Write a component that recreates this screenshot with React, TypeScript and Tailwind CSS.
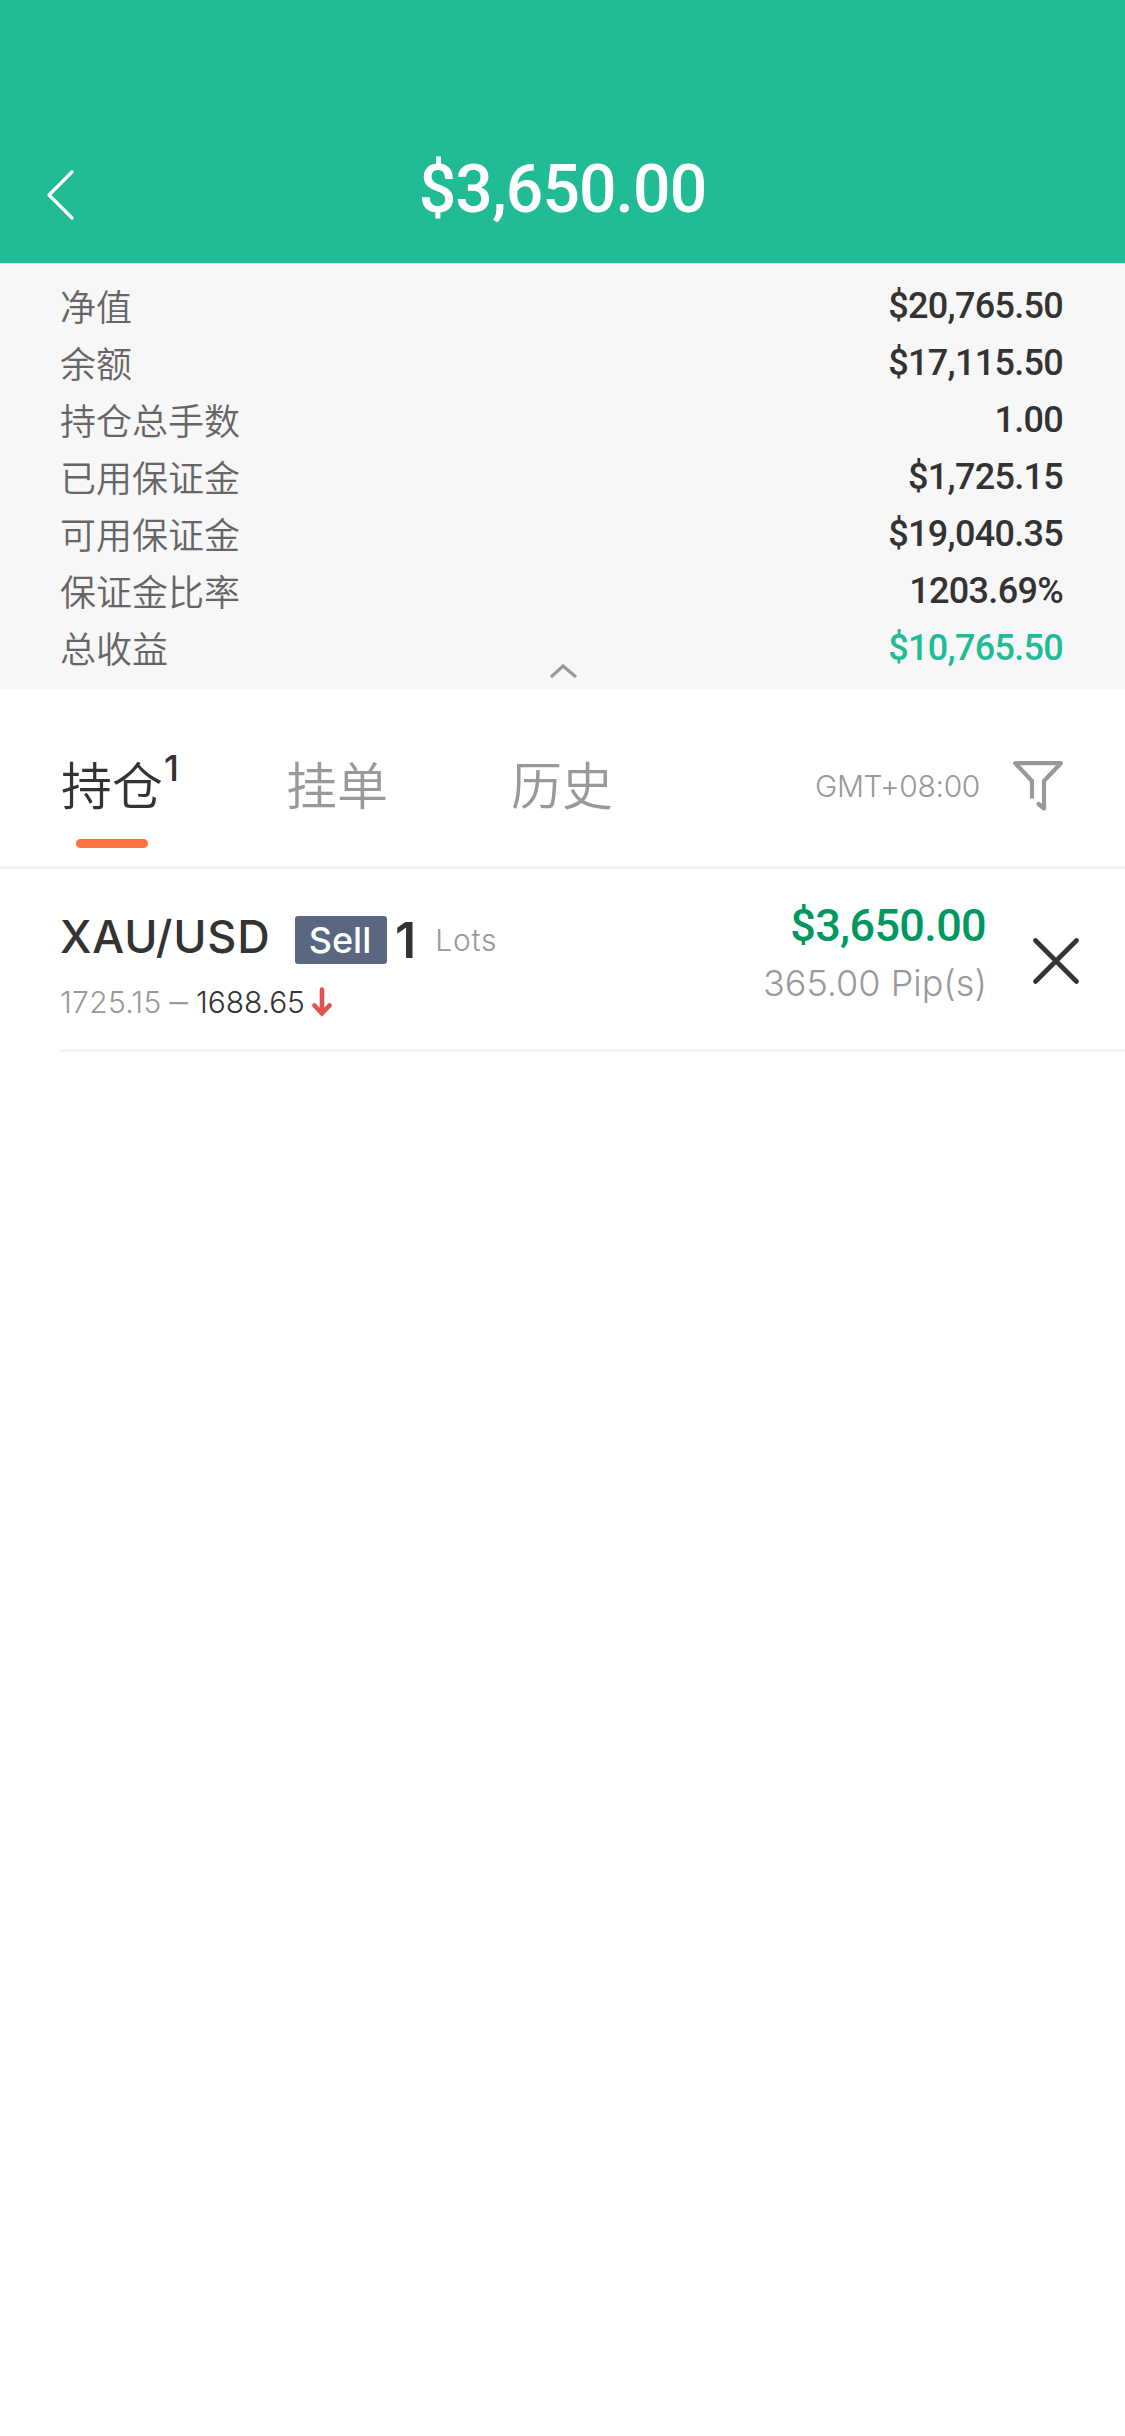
const SUMMARY = [
  { label: "净值", value: "$20,765.50" },
  { label: "余额", value: "$17,115.50" },
  { label: "持仓总手数", value: "1.00" },
  { label: "已用保证金", value: "$1,725.15" },
  { label: "可用保证金", value: "$19,040.35" },
  { label: "保证金比率", value: "1203.69%" },
  { label: "总收益", value: "$10,765.50", positive: true },
];

function Header() {
  return (
    <header className="flex h-[263px] items-end bg-[#21bb95]">
      <div className="grid h-[138px] w-full grid-cols-[120px_1fr_120px] items-center">
        <svg className="ml-[46px] mt-[2px] h-[50px] w-[30px]" viewBox="0 0 30 50" fill="none" stroke="#fff" strokeWidth="3.2" strokeLinecap="round" strokeLinejoin="round">
          <path d="M26 2 3 25l23 23" />
        </svg>
        <h1 className="mb-2 text-center font-['Roboto'] text-[66px] font-medium leading-none tracking-[-0.9px] text-white">$3,650.00</h1>
      </div>
    </header>
  );
}

function Summary() {
  return (
    <section className="relative h-[426px] border-t border-[#dcdcdc] bg-[#f7f7f7] pl-[60px] pr-[62px] pt-[14px]">
      {SUMMARY.map((row) => (
        <div key={row.label} className="flex h-[57px] items-center justify-between">
          <span className="pb-[2px] text-4xl/[57px] font-[350] text-[#666]">{row.label}</span>
          <span
            className={`pb-px font-['Roboto'] text-4xl/[54px] font-medium tracking-[-0.7px] ${
              row.positive ? "text-[#21bb95]" : "text-[#333]"
            }`}
          >
            {row.value}
          </span>
        </div>
      ))}
      <svg className="absolute left-[549px] top-[400px] h-[14px] w-[30px]" viewBox="0 0 30 14" fill="none" stroke="#999" strokeWidth="3.2">
        <path d="M2 13 14 2 27 13" />
      </svg>
    </section>
  );
}

function Tabs() {
  return (
    <nav className="flex h-[180px] items-center border-b-3 border-[#f3f3f3] pl-[61px] pr-[62px] pt-[11px] text-[51px] font-[350] text-[#999]">
      <div className="relative w-[225px] text-[#333]">
        持仓
        <span className="absolute left-[103px] top-[3px] font-['Inter'] text-4xl font-medium">1</span>
        <span className="absolute left-[15px] top-[94px] h-[9px] w-18 rounded-full bg-[#ff7240]" />
      </div>
      <div className="w-[225px]">挂单</div>
      <div>历史</div>
      <div className="ml-auto mt-[6px] flex items-center">
        <span className="font-['Inter'] text-3xl font-[350] tracking-[-0.35px]">GMT+08:00</span>
        <svg className="ml-[33px] h-[50px] w-[50px]" viewBox="0 0 50 50" fill="none" stroke="#999" strokeWidth="4.2" strokeLinecap="round" strokeLinejoin="round">
          <path d="M19 36V20L2.200 2.200H47.800L31 20V47.500L25.500 43" />
        </svg>
      </div>
    </nav>
  );
}

function Position() {
  return (
    <article className="ml-[60px] flex h-[183px] border-b-3 border-[#f3f3f3] font-['Inter']">
      <div className="flex-1 pt-[41px]">
        <div className="flex h-[60px] items-center">
          <span className="mb-2 w-[235px] text-[45px] font-medium leading-none tracking-[0.8px] text-[#333]">XAU/USD</span>
          <span className="flex h-12 w-[92px] items-center justify-center rounded-[3px] bg-[#596880] pr-[2px] text-4xl font-medium text-white">
            Sell
          </span>
          <span className="ml-[8px] text-[50px] font-semibold leading-none text-[#333]">1</span>
          <span className="ml-[19px] text-3xl font-[350] tracking-[0.8px] text-[#999]">Lots</span>
        </div>
        <div className="mt-[2px] flex h-[60px] items-center text-3xl font-[350] text-[#333]">
          <span className="tracking-[0.3px] text-[#999]">1725.15</span>
          <span className="ml-[8px] mr-[8px] text-[37px] text-[#999]">–</span>
          <span className="tracking-[-0.1px]">1688.65</span>
          <svg className="ml-[7px] h-[30px] w-[20px]" viewBox="0 0 20 30" fill="none" stroke="#e05353" strokeWidth="4.600" strokeLinecap="round">
            <path d="M10 2.500V26M2.500 18.500 10 26.500 17.500 18.500" />
          </svg>
        </div>
      </div>
      <div className="flex flex-col items-end pt-[23px]">
        <span className="mr-px font-['Roboto'] text-[45px]/[67px] font-medium tracking-[-0.65px] text-[#009860]">$3,650.00</span>
        <span className="mt-1 text-4xl font-[350] text-[#999]">365.00 Pip(s)</span>
      </div>
      <svg className="mb-auto ml-[46px] mr-[46px] mt-[69px] h-[46px] w-[46px]" viewBox="0 0 46 46" stroke="#333" strokeWidth="4.600" strokeLinecap="round">
        <path d="M2.500 2.500 43.500 43.500M43.500 2.500 2.500 43.500" />
      </svg>
    </article>
  );
}

export default function App() {
  return (
    <main className="min-h-[2436px] w-[1125px] bg-white font-['Noto_Sans_CJK_SC',sans-serif]">
      <Header />
      <Summary />
      <Tabs />
      <Position />
    </main>
  );
}
